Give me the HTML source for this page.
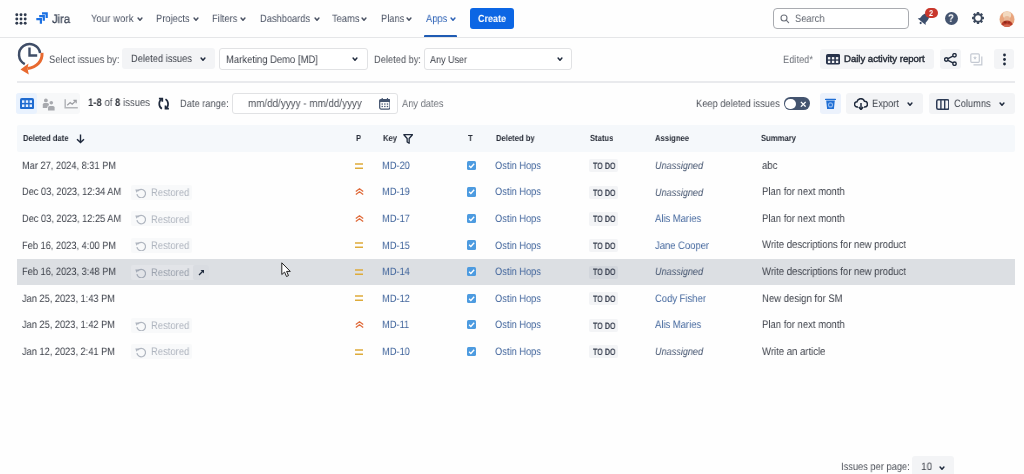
<!DOCTYPE html>
<html><head><meta charset="utf-8">
<style>
*{box-sizing:border-box;margin:0;padding:0}
html,body{width:1024px;height:474px;overflow:hidden;background:#fefefe;font-family:"Liberation Sans",sans-serif;color:#292a2e}
.a{position:absolute}
.t{position:absolute;white-space:nowrap;line-height:12px;transform-origin:0 0;text-rendering:geometricPrecision;will-change:transform}
</style></head><body>
<svg class="a" style="left:14.5px;top:12.5px" width="12" height="12" viewBox="0 0 12 12"><g fill="#2f3a4d"><circle cx="1.8" cy="1.8" r="1.45"/><circle cx="6" cy="1.8" r="1.45"/><circle cx="10.2" cy="1.8" r="1.45"/><circle cx="1.8" cy="6" r="1.45"/><circle cx="6" cy="6" r="1.45"/><circle cx="10.2" cy="6" r="1.45"/><circle cx="1.8" cy="10.2" r="1.45"/><circle cx="6" cy="10.2" r="1.45"/><circle cx="10.2" cy="10.2" r="1.45"/></g></svg>
<svg class="a" style="left:35px;top:12px" width="14" height="13" viewBox="0 0 14 13"><g fill="none" stroke="#1b70e2" stroke-width="2.2" stroke-linejoin="miter"><path d="M7 1.3H11.7V6"/><path d="M4.2 4.2H8.8V8.8"/><path d="M1.3 7.1H5.9V11.7"/></g></svg>
<div class="t" style="left:51.80px;top:13px;font-size:12.20px;color:#353e50;-webkit-text-stroke:0.25px #353e50;transform:scaleX(0.9259);">Jira</div>
<div class="t" style="left:90.70px;top:13px;font-size:10.70px;color:#4a5263;letter-spacing:0.2px;transform:scaleX(0.8696);">Your work</div>
<svg class="a" style="left:136.60px;top:16.90px" width="6.0" height="4.3" viewBox="-0.5 -0.5 6.0 4.3"><path d="M0.6 0.6L2.50 2.70L4.40 0.6" fill="none" stroke="#4a5263" stroke-width="1.5" stroke-linecap="round" stroke-linejoin="round"/></svg>
<div class="t" style="left:156.20px;top:13px;font-size:10.70px;color:#4a5263;transform:scaleX(0.8696);">Projects</div>
<svg class="a" style="left:192.50px;top:16.90px" width="6.0" height="4.3" viewBox="-0.5 -0.5 6.0 4.3"><path d="M0.6 0.6L2.50 2.70L4.40 0.6" fill="none" stroke="#4a5263" stroke-width="1.5" stroke-linecap="round" stroke-linejoin="round"/></svg>
<div class="t" style="left:212.40px;top:13px;font-size:10.70px;color:#4a5263;transform:scaleX(0.8696);">Filters</div>
<svg class="a" style="left:240.20px;top:16.90px" width="6.0" height="4.3" viewBox="-0.5 -0.5 6.0 4.3"><path d="M0.6 0.6L2.50 2.70L4.40 0.6" fill="none" stroke="#4a5263" stroke-width="1.5" stroke-linecap="round" stroke-linejoin="round"/></svg>
<div class="t" style="left:260.00px;top:13px;font-size:10.70px;color:#4a5263;transform:scaleX(0.8696);">Dashboards</div>
<svg class="a" style="left:313.50px;top:16.90px" width="6.0" height="4.3" viewBox="-0.5 -0.5 6.0 4.3"><path d="M0.6 0.6L2.50 2.70L4.40 0.6" fill="none" stroke="#4a5263" stroke-width="1.5" stroke-linecap="round" stroke-linejoin="round"/></svg>
<div class="t" style="left:332.30px;top:13px;font-size:10.70px;color:#4a5263;transform:scaleX(0.8696);">Teams</div>
<svg class="a" style="left:361.40px;top:16.90px" width="6.0" height="4.3" viewBox="-0.5 -0.5 6.0 4.3"><path d="M0.6 0.6L2.50 2.70L4.40 0.6" fill="none" stroke="#4a5263" stroke-width="1.5" stroke-linecap="round" stroke-linejoin="round"/></svg>
<div class="t" style="left:381.00px;top:13px;font-size:10.70px;color:#4a5263;transform:scaleX(0.8696);">Plans</div>
<svg class="a" style="left:405.90px;top:16.90px" width="6.0" height="4.3" viewBox="-0.5 -0.5 6.0 4.3"><path d="M0.6 0.6L2.50 2.70L4.40 0.6" fill="none" stroke="#4a5263" stroke-width="1.5" stroke-linecap="round" stroke-linejoin="round"/></svg>
<div class="t" style="left:426.10px;top:13px;font-size:10.70px;color:#2d62b6;transform:scaleX(0.8696);">Apps</div>
<svg class="a" style="left:449.50px;top:16.90px" width="6.0" height="4.3" viewBox="-0.5 -0.5 6.0 4.3"><path d="M0.6 0.6L2.50 2.70L4.40 0.6" fill="none" stroke="#2d62b6" stroke-width="1.5" stroke-linecap="round" stroke-linejoin="round"/></svg>
<div class="a" style="left:424.00px;top:35.00px;width:33.00px;height:2.60px;background:#1f5bb3;border-radius:1px;"></div>
<div class="a" style="left:470.10px;top:7.60px;width:44.10px;height:21.10px;background:#0c66e4;border-radius:3px;"></div>
<div class="t" style="left:478.30px;top:14px;font-size:10.35px;color:#fff;font-weight:700;transform:scaleX(0.8696);">Create</div>
<div class="a" style="left:0.00px;top:36.80px;width:1024.00px;height:1.00px;background:#e5e6e8;border-radius:0px;"></div>
<div class="a" style="left:773.4px;top:7.6px;width:136px;height:21.6px;border:1.2px solid #a9abb0;border-radius:4px;background:#fff"></div>
<svg class="a" style="left:779.5px;top:13.8px" width="10" height="10" viewBox="0 0 10 10"><circle cx="4" cy="4" r="3" fill="none" stroke="#6e737c" stroke-width="1.1"/><path d="M6.2 6.2L8.6 8.6" stroke="#6e737c" stroke-width="1.2" stroke-linecap="round"/></svg>
<div class="t" style="left:795.00px;top:13px;font-size:10.70px;color:#5f646d;transform:scaleX(0.8696);">Search</div>
<svg class="a" style="left:916px;top:11px" width="16" height="16" viewBox="0 0 16 16"><g transform="rotate(40 8 8)" fill="#3d4e6c"><path d="M8 2.2C5.6 2.2 4.4 4 4.4 6.2V9.8L2.8 11.6H13.2L11.6 9.8V6.2C11.6 4 10.4 2.2 8 2.2Z"/><circle cx="8" cy="13.2" r="1.1"/></g></svg>
<div class="a" style="left:925.40px;top:7.80px;width:12.40px;height:10.20px;background:#c9372c;border-radius:5.1px;"></div>
<div class="t" style="left:928.80px;top:7px;font-size:8.62px;color:#fff;font-weight:700;transform:scaleX(0.8696);">2</div>
<div class="a" style="left:944.80px;top:11.80px;width:13.40px;height:13.40px;background:#44546f;border-radius:7px;"></div>
<div class="t" style="left:948.30px;top:13px;font-size:11.27px;color:#fff;font-weight:700;transform:scaleX(0.8696);">?</div>
<svg class="a" style="left:972px;top:12.3px" width="12" height="12" viewBox="0 0 14 14"><g fill="#3d4a5e"><rect x="5.6" y="0" width="2.8" height="3" rx="0.6" transform="rotate(0 7 7)"/><rect x="5.6" y="0" width="2.8" height="3" rx="0.6" transform="rotate(45 7 7)"/><rect x="5.6" y="0" width="2.8" height="3" rx="0.6" transform="rotate(90 7 7)"/><rect x="5.6" y="0" width="2.8" height="3" rx="0.6" transform="rotate(135 7 7)"/><rect x="5.6" y="0" width="2.8" height="3" rx="0.6" transform="rotate(180 7 7)"/><rect x="5.6" y="0" width="2.8" height="3" rx="0.6" transform="rotate(225 7 7)"/><rect x="5.6" y="0" width="2.8" height="3" rx="0.6" transform="rotate(270 7 7)"/><rect x="5.6" y="0" width="2.8" height="3" rx="0.6" transform="rotate(315 7 7)"/></g><circle cx="7" cy="7" r="4.4" fill="none" stroke="#3d4a5e" stroke-width="2.1"/></svg>
<svg class="a" style="left:999px;top:10.6px" width="16" height="16" viewBox="0 0 16 16"><defs><clipPath id="av"><circle cx="8" cy="8" r="7.9"/></clipPath></defs><g clip-path="url(#av)"><rect width="16" height="16" fill="#f4e6dc"/><ellipse cx="8" cy="8.5" rx="7.4" ry="8" fill="#e9a47c"/><ellipse cx="8" cy="4" rx="4.2" ry="3.6" fill="#f2d9bf"/><ellipse cx="8" cy="8.3" rx="3" ry="3.4" fill="#e8b898"/><ellipse cx="8" cy="13.2" rx="5.5" ry="3.6" fill="#b93c2a"/><ellipse cx="6.2" cy="11.3" rx="1.6" ry="1.1" fill="#8e2818"/><ellipse cx="10" cy="11.5" rx="1.3" ry="1" fill="#9a2e1e"/><ellipse cx="8" cy="15" rx="4" ry="1.8" fill="#d46a52"/></g></svg>
<svg class="a" style="left:15px;top:41px" width="30" height="36" viewBox="0 0 30 36">
<path d="M25.1 12A10.6 10.6 0 1 0 9.8 23.1" fill="none" stroke="#3f4d67" stroke-width="2.5"/>
<path d="M14.5 6.6V14.5H22.2" fill="none" stroke="#3f4d67" stroke-width="2.4"/>
<path d="M27 11.8C27.6 20 22 26.2 12.5 27.6" fill="none" stroke="#e8692f" stroke-width="3"/>
<path d="M5.5 28.4L13.5 22.6L12.5 27.5L13.8 33.6Z" fill="#e8692f"/>
</svg>
<div class="t" style="left:49.10px;top:54px;font-size:10.81px;color:#4f535b;transform:scaleX(0.8696);">Select issues by:</div>
<div class="a" style="left:122.20px;top:48.20px;width:93.00px;height:21.20px;background:#f3f4f6;border-radius:3px;"></div>
<div class="t" style="left:130.70px;top:53px;font-size:10.70px;color:#3d414a;transform:scaleX(0.8696);">Deleted issues</div>
<svg class="a" style="left:199.80px;top:57.40px" width="6.0" height="4.3" viewBox="-0.5 -0.5 6.0 4.3"><path d="M0.6 0.6L2.50 2.70L4.40 0.6" fill="none" stroke="#1f2a3d" stroke-width="1.5" stroke-linecap="round" stroke-linejoin="round"/></svg>
<div class="a" style="left:219.3px;top:48.2px;width:149.2px;height:21.5px;border:1px solid #e1e2e4;border-radius:3px;background:#fff"></div>
<div class="t" style="left:225.60px;top:54px;font-size:10.87px;color:#3d414a;transform:scaleX(0.8696);">Marketing Demo [MD]</div>
<svg class="a" style="left:352.40px;top:57.40px" width="6.0" height="4.3" viewBox="-0.5 -0.5 6.0 4.3"><path d="M0.6 0.6L2.50 2.70L4.40 0.6" fill="none" stroke="#1f2a3d" stroke-width="1.5" stroke-linecap="round" stroke-linejoin="round"/></svg>
<div class="t" style="left:374.40px;top:54px;font-size:10.70px;color:#4f535b;transform:scaleX(0.8696);">Deleted by:</div>
<div class="a" style="left:424.1px;top:48.2px;width:148.4px;height:21.5px;border:1px solid #e1e2e4;border-radius:3px;background:#fff"></div>
<div class="t" style="left:429.70px;top:55px;font-size:10.35px;color:#3d414a;transform:scaleX(0.8696);">Any User</div>
<svg class="a" style="left:556.50px;top:57.40px" width="6.0" height="4.3" viewBox="-0.5 -0.5 6.0 4.3"><path d="M0.6 0.6L2.50 2.70L4.40 0.6" fill="none" stroke="#1f2a3d" stroke-width="1.5" stroke-linecap="round" stroke-linejoin="round"/></svg>
<div class="t" style="left:783.10px;top:54px;font-size:10.70px;color:#6d7179;transform:scaleX(0.8696);">Edited*</div>
<div class="a" style="left:820.40px;top:48.70px;width:113.30px;height:20.60px;background:#f3f4f6;border-radius:3px;"></div>
<svg class="a" style="left:826px;top:54.2px" width="14.2" height="10.6" viewBox="0 0 14.2 10.6"><rect x="0" y="0" width="14.2" height="10.6" rx="1.8" fill="#27324a"/><g fill="#f3f4f6"><rect x="1.9" y="3.1" width="2.4" height="2.3"/><rect x="5.9" y="3.1" width="2.4" height="2.3"/><rect x="9.9" y="3.1" width="2.4" height="2.3"/><rect x="1.9" y="6.7" width="2.4" height="2.3"/><rect x="5.9" y="6.7" width="2.4" height="2.3"/><rect x="9.9" y="6.7" width="2.4" height="2.3"/></g></svg>
<div class="t" style="left:843.90px;top:54px;font-size:9.55px;color:#2a303b;-webkit-text-stroke:0.45px #2a303b;">Daily activity report</div>
<div class="a" style="left:940.00px;top:48.70px;width:20.50px;height:20.60px;background:#f3f4f6;border-radius:3px;"></div>
<svg class="a" style="left:943.5px;top:52.5px" width="13" height="13" viewBox="0 0 13 13"><g fill="none" stroke="#1f2a3d" stroke-width="1.4"><circle cx="10.5" cy="2.3" r="1.7"/><circle cx="2.3" cy="6.5" r="1.7"/><circle cx="10.5" cy="10.7" r="1.7"/><path d="M4 5.6L8.9 3.1M4 7.4L8.9 9.9"/></g></svg>
<svg class="a" style="left:970.4px;top:52.5px" width="13" height="13" viewBox="0 0 13 13"><g fill="none" stroke="#c4c9d2" stroke-width="1.2"><rect x="0.8" y="0.8" width="8.5" height="8.5" rx="1"/><path d="M11.8 3.5V11.8H3.5"/></g><path d="M5 2.8L5.5 4.3H7L5.8 5.2L6.2 6.7L5 5.8L3.8 6.7L4.2 5.2L3 4.3H4.5Z" fill="#c4c9d2"/></svg>
<div class="a" style="left:994.00px;top:48.70px;width:20.40px;height:20.60px;background:#f3f4f6;border-radius:3px;"></div>
<svg class="a" style="left:1001.5px;top:52.5px" width="5" height="13" viewBox="0 0 5 13"><g fill="#1f2a3d"><circle cx="2.5" cy="2" r="1.4"/><circle cx="2.5" cy="6.5" r="1.4"/><circle cx="2.5" cy="11" r="1.4"/></g></svg>
<div class="a" style="left:16.50px;top:81.00px;width:998.40px;height:1.80px;background:#e9eaed;border-radius:0px;"></div>
<div class="a" style="left:16.00px;top:93.10px;width:64.00px;height:21.00px;background:#f7f8f9;border-radius:3px;"></div>
<div class="a" style="left:16.00px;top:93.10px;width:21.00px;height:21.00px;background:#e9f2fe;border-radius:3px;"></div>
<svg class="a" style="left:20.2px;top:98.2px" width="14" height="11.3" viewBox="0 0 14 11.3"><rect width="14" height="11.3" rx="1.8" fill="#1f6bd0"/><g fill="#e4efff"><rect x="2" y="2.3" width="2.4" height="2.6"/><rect x="5.8" y="2.3" width="2.4" height="2.6"/><rect x="9.6" y="2.3" width="2.4" height="2.6"/><rect x="2" y="6.4" width="2.4" height="2.6"/><rect x="5.8" y="6.4" width="2.4" height="2.6"/><rect x="9.6" y="6.4" width="2.4" height="2.6"/></g></svg>
<svg class="a" style="left:42px;top:97.5px" width="14" height="13" viewBox="0 0 14 13"><g fill="#a7a9ae"><circle cx="3.9" cy="2.4" r="1.9"/><path d="M0.8 6.6Q0.8 5 2.4 5H5.4Q7 5 7 6.6V9.9H0.8Z"/></g><circle cx="9.3" cy="4.7" r="2.3" fill="#f6f7f8"/><path d="M5.3 12.9V9.4Q5.3 7.2 7.3 7.2H11.3Q13.3 7.2 13.3 9.4V12.9Z" fill="#f6f7f8"/><g fill="#a7a9ae"><circle cx="9.3" cy="4.7" r="1.8"/><path d="M6 12.6V9.6Q6 7.9 7.6 7.9H11Q12.6 7.9 12.6 9.6V12.6Z"/></g></svg>
<svg class="a" style="left:63.5px;top:99.3px" width="14.5" height="10" viewBox="0 0 14.5 10"><path d="M1.2 0.3V8.7H13.8" fill="none" stroke="#b4b6ba" stroke-width="1.5"/><g fill="none" stroke="#9d9fa4" stroke-width="1.2"><path d="M3.2 6.3L6.2 3.5L8.2 5.3L11.8 1.8"/><path d="M9.4 1.4H12.2V4.2"/></g></svg>
<div class="t" style="left:87.80px;top:97px;font-size:10.98px;color:#4f535b;transform:scaleX(0.8696);"><b style="color:#2f333b">1-8</b> of <b style="color:#2f333b">8</b> issues</div>
<svg class="a" style="left:152px;top:94px" width="24" height="20" viewBox="0 0 24 20"><g fill="none" stroke="#1f2a3d" stroke-width="1.7" stroke-linecap="butt"><path d="M9.9 14.7C6.4 12.5 6.4 7.2 9.6 5.2"/><path d="M6.9 4.7H10.3V7.8"/><path d="M13.5 5.1C16.9 7.2 16.9 12.6 13.8 14.5"/><path d="M13.5 11.4V14.6H16.9"/></g></svg>
<div class="t" style="left:180.40px;top:98px;font-size:10.70px;color:#4f535b;transform:scaleX(0.8696);">Date range:</div>
<div class="a" style="left:231.6px;top:93.2px;width:166.8px;height:21.1px;border:1px solid #e1e2e4;border-radius:3px;background:#fff"></div>
<div class="t" style="left:247.70px;top:98px;font-size:11.34px;color:#4f535b;transform:scaleX(0.8696);">mm/dd/yyyy - mm/dd/yyyy</div>
<svg class="a" style="left:378.5px;top:97.8px" width="11.7" height="11.8" viewBox="0 0 12 12"><rect x="0.7" y="1.5" width="10.6" height="9.8" rx="1.5" fill="none" stroke="#44546f" stroke-width="1.3"/><rect x="0.7" y="1.5" width="10.6" height="2.6" fill="#44546f"/><path d="M3.3 0V2M8.7 0V2" stroke="#44546f" stroke-width="1.2"/><g fill="#44546f"><rect x="2.6" y="5.5" width="1.4" height="1.3"/><rect x="5.3" y="5.5" width="1.4" height="1.3"/><rect x="8" y="5.5" width="1.4" height="1.3"/><rect x="2.6" y="8" width="1.4" height="1.3"/><rect x="5.3" y="8" width="1.4" height="1.3"/><rect x="8" y="8" width="1.4" height="1.3"/></g></svg>
<div class="t" style="left:401.90px;top:98px;font-size:10.70px;color:#6f737a;transform:scaleX(0.8696);">Any dates</div>
<div class="t" style="left:695.90px;top:98px;font-size:10.70px;color:#4f535b;transform:scaleX(0.8696);">Keep deleted issues</div>
<div class="a" style="left:784.00px;top:97.30px;width:26.00px;height:12.70px;background:#44546f;border-radius:6.4px;"></div>
<div class="a" style="left:785.30px;top:98.50px;width:10.40px;height:10.40px;background:#fff;border-radius:5.2px;"></div>
<svg class="a" style="left:799.8px;top:100.5px" width="6.5" height="6.5" viewBox="0 0 6 6"><path d="M0.8 0.8L5.2 5.2M5.2 0.8L0.8 5.2" stroke="#fff" stroke-width="1.2"/></svg>
<div class="a" style="left:820.00px;top:93.30px;width:20.60px;height:21.10px;background:#ecf2fc;border-radius:3px;"></div>
<svg class="a" style="left:824px;top:98px" width="13" height="12" viewBox="0 0 13 12"><path d="M1 1.2Q1 0.7 1.6 0.7H11.4Q12 0.7 12 1.2V2.1H1Z" fill="#1f6ed4"/><path d="M2.2 2.6H10.8L9.9 11.1H3.1Z" fill="#1f6ed4"/><circle cx="6.5" cy="6.9" r="2" fill="none" stroke="#8fb8f0" stroke-width="1.1"/></svg>
<div class="a" style="left:846.00px;top:93.30px;width:77.20px;height:21.10px;background:#f3f4f6;border-radius:3px;"></div>
<svg class="a" style="left:853.8px;top:98px" width="14" height="12.2" viewBox="0 0 14 12"><path d="M4 8.8H3.2A2.6 2.6 0 0 1 3 3.6A3.9 3.9 0 0 1 10.5 3.2A2.8 2.8 0 0 1 10.8 8.8H10" fill="none" stroke="#1f2a3d" stroke-width="1.5"/><path d="M7 5V11" stroke="#1f2a3d" stroke-width="1.5"/><path d="M4.8 9L7 11.5L9.2 9" fill="none" stroke="#1f2a3d" stroke-width="1.5"/></svg>
<div class="t" style="left:871.70px;top:98px;font-size:10.70px;color:#40454e;transform:scaleX(0.8696);">Export</div>
<svg class="a" style="left:907.00px;top:102.00px" width="6.0" height="4.3" viewBox="-0.5 -0.5 6.0 4.3"><path d="M0.6 0.6L2.50 2.70L4.40 0.6" fill="none" stroke="#1f2a3d" stroke-width="1.5" stroke-linecap="round" stroke-linejoin="round"/></svg>
<div class="a" style="left:929.00px;top:93.30px;width:85.60px;height:21.00px;background:#f3f4f6;border-radius:3px;"></div>
<svg class="a" style="left:935.6px;top:98.5px" width="13.6" height="11" viewBox="0 0 13.6 11"><rect x="0.75" y="0.75" width="12.1" height="9.5" rx="1.5" fill="none" stroke="#2c3a54" stroke-width="1.5"/><path d="M4.9 0.8V10.2M8.7 0.8V10.2" stroke="#2c3a54" stroke-width="1.4"/></svg>
<div class="t" style="left:953.50px;top:98px;font-size:10.70px;color:#40454e;transform:scaleX(0.8696);">Columns</div>
<svg class="a" style="left:999.00px;top:102.00px" width="6.0" height="4.3" viewBox="-0.5 -0.5 6.0 4.3"><path d="M0.6 0.6L2.50 2.70L4.40 0.6" fill="none" stroke="#1f2a3d" stroke-width="1.5" stroke-linecap="round" stroke-linejoin="round"/></svg>
<div class="a" style="left:17.00px;top:125.40px;width:997.60px;height:26.90px;background:#f5f8fb;border-radius:2px;"></div>
<div class="t" style="left:22.90px;top:132px;font-size:8.80px;color:#2a2f3a;font-weight:700;transform:scaleX(0.8696);">Deleted date</div>
<div class="t" style="left:355.80px;top:132px;font-size:8.80px;color:#2a2f3a;font-weight:700;transform:scaleX(0.8696);">P</div>
<div class="t" style="left:383.30px;top:132px;font-size:8.80px;color:#2a2f3a;font-weight:700;transform:scaleX(0.8696);">Key</div>
<div class="t" style="left:468.30px;top:132px;font-size:8.80px;color:#2a2f3a;font-weight:700;transform:scaleX(0.8696);">T</div>
<div class="t" style="left:495.50px;top:132px;font-size:8.80px;color:#2a2f3a;font-weight:700;transform:scaleX(0.8696);">Deleted by</div>
<div class="t" style="left:590.20px;top:132px;font-size:8.80px;color:#2a2f3a;font-weight:700;transform:scaleX(0.8696);">Status</div>
<div class="t" style="left:655.20px;top:132px;font-size:8.80px;color:#2a2f3a;font-weight:700;transform:scaleX(0.8696);">Assignee</div>
<div class="t" style="left:761.10px;top:132px;font-size:8.80px;color:#2a2f3a;font-weight:700;transform:scaleX(0.8696);">Summary</div>
<svg class="a" style="left:76.2px;top:134px" width="9" height="9.5" viewBox="0 0 9 9.5"><path d="M4.5 0.5V8.6M1 5.2L4.5 8.6L8 5.2" fill="none" stroke="#1f2a3d" stroke-width="1.4"/></svg>
<svg class="a" style="left:403.2px;top:134.3px" width="10.3" height="10" viewBox="0 0 10 10"><path d="M0.7 0.7H9.3L6 4.5V9.3L4 8V4.5Z" fill="none" stroke="#1f2a3d" stroke-width="1.3" stroke-linejoin="round"/></svg>
<div class="t" style="left:22.10px;top:160px;font-size:10.64px;color:#3d414a;transform:scaleX(0.8696);">Mar 27, 2024, 8:31 PM</div>
<svg class="a" style="left:354.9px;top:162.70px" width="8.5" height="6.5" viewBox="0 0 8.5 6.5"><path d="M0 1H8.5M0 5.3H8.5" stroke="#deab3a" stroke-width="1.4"/></svg>
<div class="t" style="left:382.30px;top:160px;font-size:10.70px;color:#41659c;transform:scaleX(0.8696);">MD-20</div>
<div class="a" style="left:466.8px;top:160.80px;width:9.2px;height:9.2px;background:#4d9be0;border-radius:1.5px"></div>
<svg class="a" style="left:466.8px;top:160.80px" width="9.2" height="9.2" viewBox="0 0 10 10"><path d="M2.3 5.2L4.2 7L7.8 3" fill="none" stroke="#fff" stroke-width="1.5"/></svg>
<div class="t" style="left:494.90px;top:160px;font-size:10.70px;color:#41659c;transform:scaleX(0.8696);">Ostin Hops</div>
<div class="a" style="left:589.30px;top:159.30px;width:28.40px;height:13.20px;background:#f3f4f6;border-radius:2px;"></div>
<div class="t" style="left:592.60px;top:160px;font-size:9.33px;color:#3b4252;font-weight:700;transform:scaleX(0.7692);">TO DO</div>
<div class="t" style="left:654.50px;top:161px;font-size:10.46px;color:#44546f;font-style:italic;transform:scaleX(0.8696);">Unassigned</div>
<div class="t" style="left:761.80px;top:160px;font-size:10.98px;color:#3d414a;transform:scaleX(0.8696);">abc</div>
<div class="t" style="left:22.10px;top:186px;font-size:10.64px;color:#3d414a;transform:scaleX(0.8696);">Dec 03, 2023, 12:34 AM</div>
<div class="a" style="left:131.20px;top:184.85px;width:61.00px;height:15.10px;background:#f8f9fa;border-radius:2px;"></div>
<svg class="a" style="left:134.7px;top:187.85px" width="11.5" height="10.5" viewBox="0 0 12 11"><path d="M2.8 3.2A4.5 4.5 0 1 1 2 6.5" fill="none" stroke="#b0b6c0" stroke-width="1.3"/><path d="M0.3 1.5L4.3 1.7L1.5 5Z" fill="#b0b6c0"/></svg>
<div class="t" style="left:151.40px;top:187px;font-size:10.87px;color:#aeb4be;transform:scaleX(0.8696);">Restored</div>
<svg class="a" style="left:354.6px;top:188.25px" width="9" height="7" viewBox="0 0 9 7"><path d="M0.8 3.5L4.5 0.8L8.2 3.5M0.8 6.5L4.5 3.8L8.2 6.5" fill="none" stroke="#e06c3c" stroke-width="1.3"/></svg>
<div class="t" style="left:382.30px;top:186px;font-size:10.70px;color:#41659c;transform:scaleX(0.8696);">MD-19</div>
<div class="a" style="left:466.8px;top:187.35px;width:9.2px;height:9.2px;background:#4d9be0;border-radius:1.5px"></div>
<svg class="a" style="left:466.8px;top:187.35px" width="9.2" height="9.2" viewBox="0 0 10 10"><path d="M2.3 5.2L4.2 7L7.8 3" fill="none" stroke="#fff" stroke-width="1.5"/></svg>
<div class="t" style="left:494.90px;top:186px;font-size:10.70px;color:#41659c;transform:scaleX(0.8696);">Ostin Hops</div>
<div class="a" style="left:589.30px;top:185.85px;width:28.40px;height:13.20px;background:#f3f4f6;border-radius:2px;"></div>
<div class="t" style="left:592.60px;top:187px;font-size:9.33px;color:#3b4252;font-weight:700;transform:scaleX(0.7692);">TO DO</div>
<div class="t" style="left:654.50px;top:188px;font-size:10.46px;color:#44546f;font-style:italic;transform:scaleX(0.8696);">Unassigned</div>
<div class="t" style="left:761.80px;top:186px;font-size:10.98px;color:#3d414a;transform:scaleX(0.8696);">Plan for next month</div>
<div class="t" style="left:22.10px;top:213px;font-size:10.64px;color:#3d414a;transform:scaleX(0.8696);">Dec 03, 2023, 12:25 AM</div>
<div class="a" style="left:131.20px;top:211.40px;width:61.00px;height:15.10px;background:#f8f9fa;border-radius:2px;"></div>
<svg class="a" style="left:134.7px;top:214.40px" width="11.5" height="10.5" viewBox="0 0 12 11"><path d="M2.8 3.2A4.5 4.5 0 1 1 2 6.5" fill="none" stroke="#b0b6c0" stroke-width="1.3"/><path d="M0.3 1.5L4.3 1.7L1.5 5Z" fill="#b0b6c0"/></svg>
<div class="t" style="left:151.40px;top:214px;font-size:10.87px;color:#aeb4be;transform:scaleX(0.8696);">Restored</div>
<svg class="a" style="left:354.6px;top:214.80px" width="9" height="7" viewBox="0 0 9 7"><path d="M0.8 3.5L4.5 0.8L8.2 3.5M0.8 6.5L4.5 3.8L8.2 6.5" fill="none" stroke="#e06c3c" stroke-width="1.3"/></svg>
<div class="t" style="left:382.30px;top:213px;font-size:10.70px;color:#41659c;transform:scaleX(0.8696);">MD-17</div>
<div class="a" style="left:466.8px;top:213.90px;width:9.2px;height:9.2px;background:#4d9be0;border-radius:1.5px"></div>
<svg class="a" style="left:466.8px;top:213.90px" width="9.2" height="9.2" viewBox="0 0 10 10"><path d="M2.3 5.2L4.2 7L7.8 3" fill="none" stroke="#fff" stroke-width="1.5"/></svg>
<div class="t" style="left:494.90px;top:213px;font-size:10.70px;color:#41659c;transform:scaleX(0.8696);">Ostin Hops</div>
<div class="a" style="left:589.30px;top:212.40px;width:28.40px;height:13.20px;background:#f3f4f6;border-radius:2px;"></div>
<div class="t" style="left:592.60px;top:213px;font-size:9.33px;color:#3b4252;font-weight:700;transform:scaleX(0.7692);">TO DO</div>
<div class="t" style="left:654.50px;top:213px;font-size:10.87px;color:#41659c;transform:scaleX(0.8696);">Alis Maries</div>
<div class="t" style="left:761.80px;top:213px;font-size:10.98px;color:#3d414a;transform:scaleX(0.8696);">Plan for next month</div>
<div class="t" style="left:22.10px;top:240px;font-size:10.64px;color:#3d414a;transform:scaleX(0.8696);">Feb 16, 2023, 4:00 PM</div>
<div class="a" style="left:131.20px;top:237.95px;width:61.00px;height:15.10px;background:#f8f9fa;border-radius:2px;"></div>
<svg class="a" style="left:134.7px;top:240.95px" width="11.5" height="10.5" viewBox="0 0 12 11"><path d="M2.8 3.2A4.5 4.5 0 1 1 2 6.5" fill="none" stroke="#b0b6c0" stroke-width="1.3"/><path d="M0.3 1.5L4.3 1.7L1.5 5Z" fill="#b0b6c0"/></svg>
<div class="t" style="left:151.40px;top:240px;font-size:10.87px;color:#aeb4be;transform:scaleX(0.8696);">Restored</div>
<svg class="a" style="left:354.9px;top:242.35px" width="8.5" height="6.5" viewBox="0 0 8.5 6.5"><path d="M0 1H8.5M0 5.3H8.5" stroke="#deab3a" stroke-width="1.4"/></svg>
<div class="t" style="left:382.30px;top:240px;font-size:10.70px;color:#41659c;transform:scaleX(0.8696);">MD-15</div>
<div class="a" style="left:466.8px;top:240.45px;width:9.2px;height:9.2px;background:#4d9be0;border-radius:1.5px"></div>
<svg class="a" style="left:466.8px;top:240.45px" width="9.2" height="9.2" viewBox="0 0 10 10"><path d="M2.3 5.2L4.2 7L7.8 3" fill="none" stroke="#fff" stroke-width="1.5"/></svg>
<div class="t" style="left:494.90px;top:240px;font-size:10.70px;color:#41659c;transform:scaleX(0.8696);">Ostin Hops</div>
<div class="a" style="left:589.30px;top:238.95px;width:28.40px;height:13.20px;background:#f3f4f6;border-radius:2px;"></div>
<div class="t" style="left:592.60px;top:240px;font-size:9.33px;color:#3b4252;font-weight:700;transform:scaleX(0.7692);">TO DO</div>
<div class="t" style="left:654.50px;top:240px;font-size:10.87px;color:#41659c;transform:scaleX(0.8696);">Jane Cooper</div>
<div class="t" style="left:761.80px;top:239px;font-size:10.98px;color:#3d414a;transform:scaleX(0.8696);">Write descriptions for new product</div>
<div class="a" style="left:17.00px;top:258.70px;width:997.80px;height:26.35px;background:#dcdfe3;border-radius:0px;"></div>
<div class="t" style="left:22.10px;top:266px;font-size:10.64px;color:#3d414a;transform:scaleX(0.8696);">Feb 16, 2023, 3:48 PM</div>
<div class="a" style="left:131.20px;top:264.50px;width:77.40px;height:15.10px;background:#e2e4e8;border-radius:2px;"></div>
<svg class="a" style="left:134.7px;top:267.50px" width="11.5" height="10.5" viewBox="0 0 12 11"><path d="M2.8 3.2A4.5 4.5 0 1 1 2 6.5" fill="none" stroke="#a3aab6" stroke-width="1.3"/><path d="M0.3 1.5L4.3 1.7L1.5 5Z" fill="#a3aab6"/></svg>
<div class="t" style="left:151.40px;top:267px;font-size:10.87px;color:#9aa1ad;transform:scaleX(0.8696);">Restored</div>
<div class="a" style="left:192.60px;top:264.50px;width:16.00px;height:15.10px;background:#d9dce1;border-radius:2px;"></div>
<svg class="a" style="left:197.5px;top:268.90px" width="7" height="7" viewBox="0 0 7 7"><path d="M1 6L5 2" stroke="#1f2a3d" stroke-width="1.2"/><path d="M2.5 1H6V4.5Z" fill="#1f2a3d"/></svg>
<svg class="a" style="left:354.9px;top:268.90px" width="8.5" height="6.5" viewBox="0 0 8.5 6.5"><path d="M0 1H8.5M0 5.3H8.5" stroke="#deab3a" stroke-width="1.4"/></svg>
<div class="t" style="left:382.30px;top:266px;font-size:10.70px;color:#41659c;transform:scaleX(0.8696);">MD-14</div>
<div class="a" style="left:466.8px;top:267.00px;width:9.2px;height:9.2px;background:#4d9be0;border-radius:1.5px"></div>
<svg class="a" style="left:466.8px;top:267.00px" width="9.2" height="9.2" viewBox="0 0 10 10"><path d="M2.3 5.2L4.2 7L7.8 3" fill="none" stroke="#fff" stroke-width="1.5"/></svg>
<div class="t" style="left:494.90px;top:266px;font-size:10.70px;color:#41659c;transform:scaleX(0.8696);">Ostin Hops</div>
<div class="a" style="left:589.30px;top:265.50px;width:28.40px;height:13.20px;background:#d2d6dc;border-radius:2px;"></div>
<div class="t" style="left:592.60px;top:266px;font-size:9.33px;color:#3b4252;font-weight:700;transform:scaleX(0.7692);">TO DO</div>
<div class="t" style="left:654.50px;top:267px;font-size:10.46px;color:#44546f;font-style:italic;transform:scaleX(0.8696);">Unassigned</div>
<div class="t" style="left:761.80px;top:266px;font-size:10.98px;color:#3d414a;transform:scaleX(0.8696);">Write descriptions for new product</div>
<div class="t" style="left:22.10px;top:293px;font-size:10.64px;color:#3d414a;transform:scaleX(0.8696);">Jan 25, 2023, 1:43 PM</div>
<svg class="a" style="left:354.9px;top:295.45px" width="8.5" height="6.5" viewBox="0 0 8.5 6.5"><path d="M0 1H8.5M0 5.3H8.5" stroke="#deab3a" stroke-width="1.4"/></svg>
<div class="t" style="left:382.30px;top:293px;font-size:10.70px;color:#41659c;transform:scaleX(0.8696);">MD-12</div>
<div class="a" style="left:466.8px;top:293.55px;width:9.2px;height:9.2px;background:#4d9be0;border-radius:1.5px"></div>
<svg class="a" style="left:466.8px;top:293.55px" width="9.2" height="9.2" viewBox="0 0 10 10"><path d="M2.3 5.2L4.2 7L7.8 3" fill="none" stroke="#fff" stroke-width="1.5"/></svg>
<div class="t" style="left:494.90px;top:293px;font-size:10.70px;color:#41659c;transform:scaleX(0.8696);">Ostin Hops</div>
<div class="a" style="left:589.30px;top:292.05px;width:28.40px;height:13.20px;background:#f3f4f6;border-radius:2px;"></div>
<div class="t" style="left:592.60px;top:293px;font-size:9.33px;color:#3b4252;font-weight:700;transform:scaleX(0.7692);">TO DO</div>
<div class="t" style="left:654.50px;top:293px;font-size:10.87px;color:#41659c;transform:scaleX(0.8696);">Cody Fisher</div>
<div class="t" style="left:761.80px;top:293px;font-size:10.98px;color:#3d414a;transform:scaleX(0.8696);">New design for SM</div>
<div class="t" style="left:22.10px;top:319px;font-size:10.64px;color:#3d414a;transform:scaleX(0.8696);">Jan 25, 2023, 1:42 PM</div>
<div class="a" style="left:131.20px;top:317.60px;width:61.00px;height:15.10px;background:#f8f9fa;border-radius:2px;"></div>
<svg class="a" style="left:134.7px;top:320.60px" width="11.5" height="10.5" viewBox="0 0 12 11"><path d="M2.8 3.2A4.5 4.5 0 1 1 2 6.5" fill="none" stroke="#b0b6c0" stroke-width="1.3"/><path d="M0.3 1.5L4.3 1.7L1.5 5Z" fill="#b0b6c0"/></svg>
<div class="t" style="left:151.40px;top:320px;font-size:10.87px;color:#aeb4be;transform:scaleX(0.8696);">Restored</div>
<svg class="a" style="left:354.6px;top:321.00px" width="9" height="7" viewBox="0 0 9 7"><path d="M0.8 3.5L4.5 0.8L8.2 3.5M0.8 6.5L4.5 3.8L8.2 6.5" fill="none" stroke="#e06c3c" stroke-width="1.3"/></svg>
<div class="t" style="left:382.30px;top:319px;font-size:10.70px;color:#41659c;transform:scaleX(0.8696);">MD-11</div>
<div class="a" style="left:466.8px;top:320.10px;width:9.2px;height:9.2px;background:#4d9be0;border-radius:1.5px"></div>
<svg class="a" style="left:466.8px;top:320.10px" width="9.2" height="9.2" viewBox="0 0 10 10"><path d="M2.3 5.2L4.2 7L7.8 3" fill="none" stroke="#fff" stroke-width="1.5"/></svg>
<div class="t" style="left:494.90px;top:319px;font-size:10.70px;color:#41659c;transform:scaleX(0.8696);">Ostin Hops</div>
<div class="a" style="left:589.30px;top:318.60px;width:28.40px;height:13.20px;background:#f3f4f6;border-radius:2px;"></div>
<div class="t" style="left:592.60px;top:320px;font-size:9.33px;color:#3b4252;font-weight:700;transform:scaleX(0.7692);">TO DO</div>
<div class="t" style="left:654.50px;top:319px;font-size:10.87px;color:#41659c;transform:scaleX(0.8696);">Alis Maries</div>
<div class="t" style="left:761.80px;top:319px;font-size:10.98px;color:#3d414a;transform:scaleX(0.8696);">Plan for next month</div>
<div class="t" style="left:22.10px;top:346px;font-size:10.64px;color:#3d414a;transform:scaleX(0.8696);">Jan 12, 2023, 2:41 PM</div>
<div class="a" style="left:131.20px;top:344.15px;width:61.00px;height:15.10px;background:#f8f9fa;border-radius:2px;"></div>
<svg class="a" style="left:134.7px;top:347.15px" width="11.5" height="10.5" viewBox="0 0 12 11"><path d="M2.8 3.2A4.5 4.5 0 1 1 2 6.5" fill="none" stroke="#b0b6c0" stroke-width="1.3"/><path d="M0.3 1.5L4.3 1.7L1.5 5Z" fill="#b0b6c0"/></svg>
<div class="t" style="left:151.40px;top:346px;font-size:10.87px;color:#aeb4be;transform:scaleX(0.8696);">Restored</div>
<svg class="a" style="left:354.9px;top:348.55px" width="8.5" height="6.5" viewBox="0 0 8.5 6.5"><path d="M0 1H8.5M0 5.3H8.5" stroke="#deab3a" stroke-width="1.4"/></svg>
<div class="t" style="left:382.30px;top:346px;font-size:10.70px;color:#41659c;transform:scaleX(0.8696);">MD-10</div>
<div class="a" style="left:466.8px;top:346.65px;width:9.2px;height:9.2px;background:#4d9be0;border-radius:1.5px"></div>
<svg class="a" style="left:466.8px;top:346.65px" width="9.2" height="9.2" viewBox="0 0 10 10"><path d="M2.3 5.2L4.2 7L7.8 3" fill="none" stroke="#fff" stroke-width="1.5"/></svg>
<div class="t" style="left:494.90px;top:346px;font-size:10.70px;color:#41659c;transform:scaleX(0.8696);">Ostin Hops</div>
<div class="a" style="left:589.30px;top:345.15px;width:28.40px;height:13.20px;background:#f3f4f6;border-radius:2px;"></div>
<div class="t" style="left:592.60px;top:346px;font-size:9.33px;color:#3b4252;font-weight:700;transform:scaleX(0.7692);">TO DO</div>
<div class="t" style="left:654.50px;top:347px;font-size:10.46px;color:#44546f;font-style:italic;transform:scaleX(0.8696);">Unassigned</div>
<div class="t" style="left:761.80px;top:346px;font-size:10.98px;color:#3d414a;transform:scaleX(0.8696);">Write an article</div>
<svg class="a" style="left:280.7px;top:261.6px" width="11" height="16" viewBox="0 0 11 16"><path d="M0.8 0.8V12.5L3.6 10.1L5.5 14.5L7.5 13.6L5.6 9.4H9.3Z" fill="#fff" stroke="#222" stroke-width="1" stroke-linejoin="round"/></svg>
<div class="t" style="left:840.70px;top:461px;font-size:10.70px;color:#4f535b;transform:scaleX(0.8696);">Issues per page:</div>
<div class="a" style="left:912.00px;top:456.20px;width:42.40px;height:22.00px;background:#f3f4f6;border-radius:3px;"></div>
<div class="t" style="left:921.30px;top:461px;font-size:10.60px;color:#3d414a;transform:scaleX(0.9434);">10</div>
<svg class="a" style="left:938.90px;top:466.00px" width="6.0" height="4.3" viewBox="-0.5 -0.5 6.0 4.3"><path d="M0.6 0.6L2.50 2.70L4.40 0.6" fill="none" stroke="#1f2a3d" stroke-width="1.5" stroke-linecap="round" stroke-linejoin="round"/></svg>
</body></html>
